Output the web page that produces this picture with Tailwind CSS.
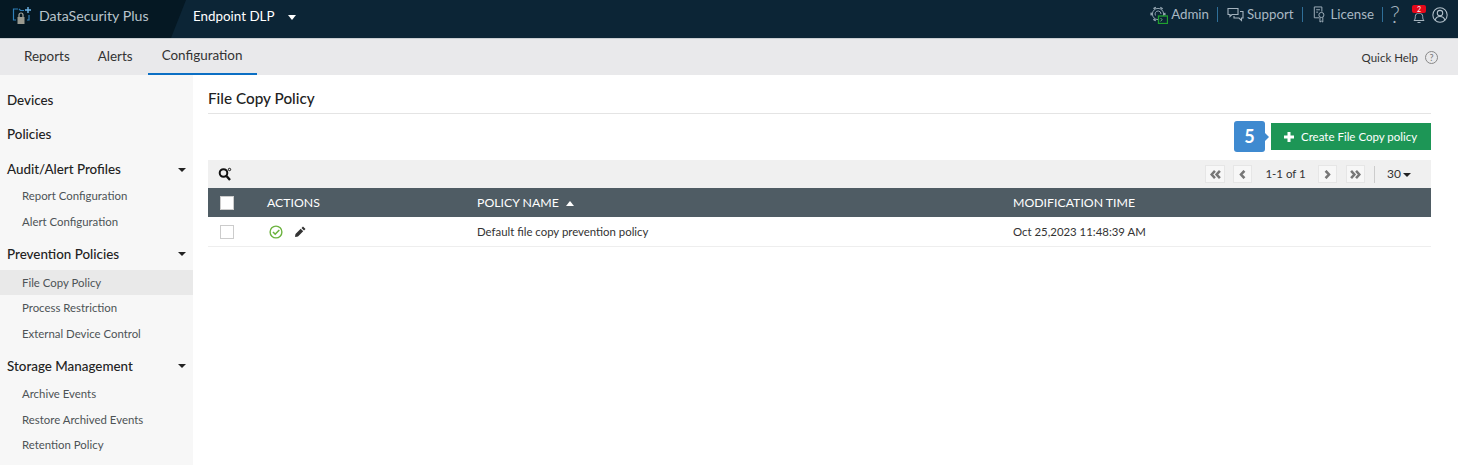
<!DOCTYPE html>
<html>
<head>
<meta charset="utf-8">
<script src="https://cdn.jsdelivr.net/npm/@tailwindcss/browser@4"></script>
</head>
<body class="w-[1458px] h-[465px] overflow-hidden bg-white font-['Lato','Open_Sans',sans-serif] text-[#333]">
<header class="relative h-[39px] bg-[#0c2536] border-b border-[#c9ced2] flex items-center text-[#a9b8c3]">
  <div class="absolute left-0 top-0 h-[38px] w-[186px] bg-[#051823] [clip-path:polygon(0_0,100%_0,171px_100%,0_100%)]"></div>
  <div class="relative flex items-center w-[193px] mb-[6px]">
    <svg class="ml-[12px] w-[19px] h-[20px]" viewBox="0 0 19 20" fill="none">
      <path d="M6 3H1.500v11H4M7 3l1.500 1.500H12" stroke="#2f7fb8" stroke-width="1.200"/>
      <path d="M17 9v5h-2" stroke="#2f7fb8" stroke-width="1.200"/>
      <path d="M16 1v6M13 4h6" stroke="#6fb4e6" stroke-width="1.400"/>
      <rect x="5.500" y="11" width="7" height="7" fill="#9a9a90"/>
      <path d="M7 11V9a2 2 0 0 1 4 0v2" stroke="#a8a89e" stroke-width="1.200"/>
    </svg>
    <span class="ml-[8px] text-[14.200px] text-[#b9c4cc]">DataSecurity Plus</span>
  </div>
  <span class="relative text-[13.400px] text-white mb-[6px]">Endpoint DLP</span>
  <span class="relative ml-[13px] mb-[4px] w-0 h-0 border-x-[4px] border-x-transparent border-t-[5px] border-t-white"></span>
  <div class="ml-auto flex items-center relative h-full text-[13.300px] pb-[9px]">
    <svg class="w-[18px] h-[18px] mr-[3px]" viewBox="0 0 18 18" fill="none">
      <circle cx="8" cy="8" r="5.600" stroke="#8fa1ad" stroke-width="1"/>
      <circle cx="8" cy="8" r="6.800" stroke="#8fa1ad" stroke-width="1.600" stroke-dasharray="2.800 4.300" stroke-dashoffset="1.400"/>
      <path d="M5.500 9.500a3 3 0 0 1 3-4.500 3 3 0 0 1 2.500 3" stroke="#8fa1ad" stroke-width="1"/>
      <rect x="8.500" y="10" width="9" height="7.500" fill="#0c2536" stroke="#1fa12e" stroke-width="1.300"/>
      <path d="M10.500 12l1.700 1.700-1.700 1.500" stroke="#7fd08a" stroke-width=".8"/>
    </svg>
    <span>Admin</span>
    <span class="w-px h-[15px] bg-[#2f6f98] mx-[8px]"></span>
    <svg class="ml-[1px] w-[17px] h-[15px] mr-[3px]" viewBox="0 0 17 15" fill="none" stroke="#a4b3be" stroke-width="1.100">
      <path d="M1 1.500h10v6H5l-2 2v-2H1z"/>
      <path d="M13 4.500h3v6.500h-1.500v2.500L12 11H7V9"/>
    </svg>
    <span>Support</span>
    <span class="w-px h-[15px] bg-[#2f6f98] mx-[8px]"></span>
    <svg class="ml-[2px] w-[13px] h-[17px] mr-[5px]" viewBox="0 0 13 18" fill="none" stroke="#a4b3be" stroke-width="1">
      <path d="M6 12.500H1V1h8v5"/>
      <path d="M3 4h4M3 6.500h2" />
      <circle cx="8.500" cy="9.500" r="2.700"/>
      <path d="M7 12v5l1.500-1 1.500 1v-5"/>
    </svg>
    <span>License</span>
    <span class="w-px h-[15px] bg-[#2f6f98] ml-[8px] mr-[7px]"></span>
    <span class="w-[8px] text-[23px] font-light text-[#a4b3be] leading-none mr-[14px]">?</span>
    <div class="relative w-[14px] h-[18px] mr-[6px]">
      <svg class="absolute left-0 top-[4px] w-[14px] h-[14px]" viewBox="0 0 14 14" fill="none" stroke="#a4b3be" stroke-width="1">
        <path d="M2 10.500c1-1 1.300-2 1.300-4 0-2 1.500-3.500 3.700-3.500s3.700 1.500 3.700 3.500c0 2 .3 3 1.300 4z"/>
        <path d="M5.500 12.500h3"/>
      </svg>
      <span class="absolute left-0 top-[-1px] w-[14px] h-[8px] rounded-[2px] bg-[#e5091a] text-white text-[7px] leading-[8px] text-center">2</span>
    </div>
    <svg class="w-[16px] h-[16px] mr-[10px]" viewBox="0 0 17 17" fill="none" stroke="#b4c2cc" stroke-width="1.100">
      <circle cx="8.500" cy="8.500" r="7.600"/>
      <circle cx="8.500" cy="6.500" r="2.900"/>
      <path d="M3.300 14c.7-2.700 2.700-4 5.200-4s4.500 1.300 5.200 4"/>
    </svg>
  </div>
</header>
<nav class="h-[36px] bg-[#e9e9eb] flex items-stretch text-[13.450px] text-[#333] relative">
  <a class="ml-[24px] flex items-center pb-[2px]">Reports</a>
  <a class="ml-[28px] flex items-center pb-[2px]">Alerts</a>
  <a class="ml-[15px] w-[109px] pl-[14px] flex items-center pb-[2px] border-b-2 border-[#0b6fc4]">Configuration</a>
  <div class="ml-auto flex items-center mr-[20px] text-[11.500px] pt-[1px]">
    <span>Quick Help</span>
    <span class="ml-[7px] w-[13px] h-[13px] rounded-full border border-[#888] text-[#777] text-[9px] leading-[11px] text-center">?</span>
  </div>
</nav>
<div class="flex h-[390px]">
  <aside class="w-[193px] shrink-0 bg-[#f7f7f7] pt-[7px] text-[11.400px] text-[#4d5356]">
    <div class="h-[34px] pl-[7px] pt-[2px] flex items-center text-[13.400px] font-medium text-[#222]">Devices</div>
    <div class="h-[34px] pl-[7px] pt-[2px] flex items-center text-[13.400px] font-medium text-[#222]">Policies</div>
    <div class="h-[35px] pl-[7px] pr-[7px] pt-[2px] mt-[1px] flex items-center justify-between text-[13.400px] font-medium text-[#222]">Audit/Alert Profiles<span class="w-0 h-0 border-x-[4px] border-x-transparent border-t-[4px] border-t-[#222]"></span></div>
    <div class="h-[26px] pl-[22px] flex items-center mt-[-3px]">Report Configuration</div>
    <div class="h-[26px] pl-[22px] flex items-center">Alert Configuration</div>
    <div class="h-[34px] pl-[7px] pr-[7px] pt-[2px] flex items-center justify-between text-[13.400px] font-medium text-[#222] mt-[1px]">Prevention Policies<span class="w-0 h-0 border-x-[4px] border-x-transparent border-t-[4px] border-t-[#222]"></span></div>
    <div class="h-[25px] pl-[22px] flex items-center bg-[#e9e9e9]">File Copy Policy</div>
    <div class="h-[26px] pl-[22px] flex items-center">Process Restriction</div>
    <div class="h-[26px] pl-[22px] flex items-center">External Device Control</div>
    <div class="h-[34px] pl-[7px] pr-[7px] pt-[2px] flex items-center justify-between text-[13.400px] font-medium text-[#222] mt-[1px]">Storage Management<span class="w-0 h-0 border-x-[4px] border-x-transparent border-t-[4px] border-t-[#222]"></span></div>
    <div class="h-[26px] pl-[22px] flex items-center mt-[-1px]">Archive Events</div>
    <div class="h-[26px] pl-[22px] flex items-center">Restore Archived Events</div>
    <div class="h-[26px] pl-[22px] flex items-center mt-[-1px]">Retention Policy</div>
  </aside>
  <main class="flex-1 pl-[15px] pr-[27px]">
    <h1 class="h-[39px] pt-[13px] text-[15.300px] leading-[20px] font-medium text-[#222] border-b border-[#e4e4e4]">File Copy Policy</h1>
    <div class="h-[46px] flex justify-end items-start pt-[9px]">
      <div class="relative w-[31px] h-[31px] mt-[-2px] mr-[6px] rounded-[3px] bg-[#3f8ad0] text-white text-[18px] font-bold flex items-center justify-center">5
        <span class="absolute right-[-4px] top-[12px] w-0 h-0 border-y-[4px] border-y-transparent border-l-[4px] border-l-[#3f8ad0]"></span>
      </div>
      <button class="w-[160px] h-[27px] bg-[#1d9656] text-white text-[11.500px] flex items-center pl-[13px]">
        <svg class="w-[10px] h-[10px] mr-[7px]" viewBox="0 0 10 10" fill="#fff"><path d="M3.500 0h3v3.500H10v3H6.500V10h-3V6.500H0v-3h3.500z"/></svg>
        Create File Copy policy
      </button>
    </div>
    <div class="h-[28px] bg-[#f0f0f0] flex items-center pl-[10px] pr-[20px] text-[11.500px]">
      <svg class="w-[14px] h-[14px]" viewBox="0 0 14 14" fill="none" stroke="#111">
        <circle cx="5.500" cy="6" r="3.800" stroke-width="2"/>
        <path d="M8.500 9l3.500 4" stroke-width="2.400"/>
        <circle cx="11.500" cy="2.500" r="1.200" stroke-width="1"/>
      </svg>
      <div class="ml-auto flex items-center">
        <span class="w-[20px] h-[18px] bg-[#f7f7f7] border border-[#e6e6e6] flex items-center justify-center">
          <svg class="w-[11px] h-[9px]" viewBox="0 0 10 8" fill="none" stroke="#777" stroke-width="2.300"><path d="M4.500 .7L1.500 4l3 3.300M9 .7L6 4l3 3.300"/></svg>
        </span>
        <span class="ml-[8px] w-[19px] h-[18px] bg-[#f7f7f7] border border-[#e6e6e6] flex items-center justify-center">
          <svg class="w-[7px] h-[9px]" viewBox="0 0 6 8" fill="none" stroke="#777" stroke-width="2.300"><path d="M4.700 .7L1.700 4l3 3.300"/></svg>
        </span>
        <span class="w-[66px] pl-[1px] text-center text-[#333]">1-1 of 1</span>
        <span class="w-[19px] h-[18px] bg-[#f7f7f7] border border-[#e6e6e6] flex items-center justify-center">
          <svg class="w-[7px] h-[9px]" viewBox="0 0 6 8" fill="none" stroke="#777" stroke-width="2.300"><path d="M1.300 .7L4.300 4l-3 3.300"/></svg>
        </span>
        <span class="ml-[9px] w-[19px] h-[18px] bg-[#f7f7f7] border border-[#e6e6e6] flex items-center justify-center">
          <svg class="w-[11px] h-[9px]" viewBox="0 0 10 8" fill="none" stroke="#777" stroke-width="2.300"><path d="M1 .7L4 4 1 7.300M5.500 .7l3 3.300-3 3.300"/></svg>
        </span>
        <span class="w-px h-[17px] bg-[#ccc] ml-[9px]"></span>
        <span class="ml-[12px] text-[#333] text-[12px]">30</span>
        <span class="ml-[2px] mt-[1px] w-0 h-0 border-x-[4px] border-x-transparent border-t-[4px] border-t-[#222]"></span>
      </div>
    </div>
    <div class="h-[29px] bg-[#4f5c64] pt-[2px] flex items-center text-[12.300px] text-white">
      <div class="w-[59px] pl-[12px] mt-[-2px]"><span class="block w-[14px] h-[14px] bg-white border border-[#ccc]"></span></div>
      <div class="w-[210px]">ACTIONS</div>
      <div class="w-[536px] flex items-center">POLICY NAME<span class="ml-[7px] w-0 h-0 border-x-[4px] border-x-transparent border-b-[5px] border-b-white"></span></div>
      <div>MODIFICATION TIME</div>
    </div>
    <div class="h-[30px] flex items-center text-[11.400px] text-[#333] border-b border-[#eee]">
      <div class="w-[59px] pl-[12px]"><span class="block w-[14px] h-[14px] bg-white border border-[#ccc]"></span></div>
      <div class="w-[210px] flex items-center pl-[2px]">
        <svg class="w-[14px] h-[14px]" viewBox="0 0 14 14" fill="none" stroke="#6cb33f">
          <circle cx="7" cy="7" r="5.900" stroke-width="1.400"/>
          <path d="M4 7l2.200 2.200L10.300 5" stroke-width="1.600"/>
        </svg>
        <svg class="ml-[12px] w-[11px] h-[11px]" viewBox="0 0 11 11" fill="#333"><path d="M8 .5l2.500 2.500L9 4.500 6.500 2zM5.700 2.800l2.500 2.500L3 10.500.5 11 0 10.500.5 8z"/></svg>
      </div>
      <div class="w-[536px]">Default file copy prevention policy</div>
      <div>Oct 25,2023 11:48:39 AM</div>
    </div>
  </main>
</div>
</body>
</html>
